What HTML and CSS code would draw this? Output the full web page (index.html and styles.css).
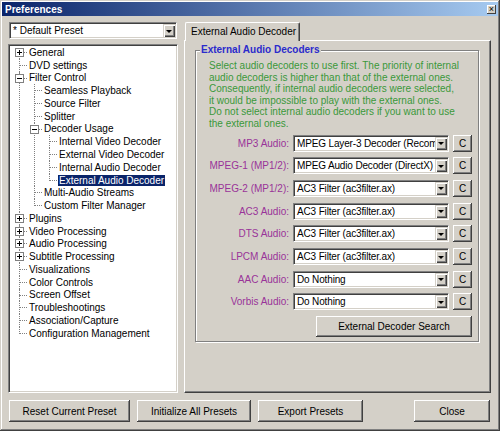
FILE: index.html
```html
<!DOCTYPE html>
<html lang="en">
<head>
    <meta charset="UTF-8">
    <title>Preferences</title>
    <link rel="stylesheet" href="styles.css">
</head>
<body>
<div class="window">
    <div class="titlebar">
        <span class="title">Preferences</span>
        <span class="close-btn">×</span>
    </div>

    <div class="main">
        <div class="left">
            <div class="combo preset"><span class="combo-text">* Default Preset</span><span class="arrow"></span></div>
            <div class="tree-box">
                <ul class="tree">
                    <li><span class="toggle plus"></span><div class="row"><span class="label">General</span></div></li>
                    <li><div class="row"><span class="label">DVD settings</span></div></li>
                    <li><span class="toggle minus"></span><div class="row"><span class="label">Filter Control</span></div>
                        <ul>
                            <li><div class="row"><span class="label">Seamless Playback</span></div></li>
                            <li><div class="row"><span class="label">Source Filter</span></div></li>
                            <li><div class="row"><span class="label">Splitter</span></div></li>
                            <li><span class="toggle minus"></span><div class="row"><span class="label">Decoder Usage</span></div>
                                <ul>
                                    <li><div class="row"><span class="label">Internal Video Decoder</span></div></li>
                                    <li><div class="row"><span class="label">External Video Decoder</span></div></li>
                                    <li><div class="row"><span class="label">Internal Audio Decoder</span></div></li>
                                    <li><div class="row"><span class="label selected">External Audio Decoder</span></div></li>
                                </ul>
                            </li>
                            <li><div class="row"><span class="label">Multi-Audio Streams</span></div></li>
                            <li><div class="row"><span class="label">Custom Filter Manager</span></div></li>
                        </ul>
                    </li>
                    <li><span class="toggle plus"></span><div class="row"><span class="label">Plugins</span></div></li>
                    <li><span class="toggle plus"></span><div class="row"><span class="label">Video Processing</span></div></li>
                    <li><span class="toggle plus"></span><div class="row"><span class="label">Audio Processing</span></div></li>
                    <li><span class="toggle plus"></span><div class="row"><span class="label">Subtitle Processing</span></div></li>
                    <li><div class="row"><span class="label">Visualizations</span></div></li>
                    <li><div class="row"><span class="label">Color Controls</span></div></li>
                    <li><div class="row"><span class="label">Screen Offset</span></div></li>
                    <li><div class="row"><span class="label">Troubleshootings</span></div></li>
                    <li><div class="row"><span class="label">Association/Capture</span></div></li>
                    <li><div class="row"><span class="label">Configuration Management</span></div></li>
                </ul>
            </div>
        </div>

        <div class="right">
            <div class="tabs"><div class="tab">External Audio Decoder</div></div>
            <div class="panel">
                <fieldset class="group">
                    <legend>External Audio Decoders</legend>
                    <p class="desc">Select audio decoders to use first. The priority of internal<br>audio decoders is higher than that of the external ones.<br>Consequently, if internal audio decoders were selected,<br>it would be impossible to play with the external ones.<br>Do not select internal audio decoders if you want to use<br>the external ones.</p>
                    <div class="decoders">
                        <span class="dec-label">MP3 Audio:</span>
                        <div class="combo"><span class="combo-text">MPEG Layer-3 Decoder (Recomm</span><span class="arrow"></span></div>
                        <button class="btn c-btn">C</button>

                        <span class="dec-label">MPEG-1 (MP1/2):</span>
                        <div class="combo"><span class="combo-text">MPEG Audio Decoder (DirectX)</span><span class="arrow"></span></div>
                        <button class="btn c-btn">C</button>

                        <span class="dec-label">MPEG-2 (MP1/2):</span>
                        <div class="combo"><span class="combo-text">AC3 Filter (ac3filter.ax)</span><span class="arrow"></span></div>
                        <button class="btn c-btn">C</button>

                        <span class="dec-label">AC3 Audio:</span>
                        <div class="combo"><span class="combo-text">AC3 Filter (ac3filter.ax)</span><span class="arrow"></span></div>
                        <button class="btn c-btn">C</button>

                        <span class="dec-label">DTS Audio:</span>
                        <div class="combo"><span class="combo-text">AC3 Filter (ac3filter.ax)</span><span class="arrow"></span></div>
                        <button class="btn c-btn">C</button>

                        <span class="dec-label">LPCM Audio:</span>
                        <div class="combo"><span class="combo-text">AC3 Filter (ac3filter.ax)</span><span class="arrow"></span></div>
                        <button class="btn c-btn">C</button>

                        <span class="dec-label">AAC Audio:</span>
                        <div class="combo"><span class="combo-text">Do Nothing</span><span class="arrow"></span></div>
                        <button class="btn c-btn">C</button>

                        <span class="dec-label">Vorbis Audio:</span>
                        <div class="combo"><span class="combo-text">Do Nothing</span><span class="arrow"></span></div>
                        <button class="btn c-btn">C</button>

                        <button class="btn search-btn">External Decoder Search</button>
                    </div>
                </fieldset>
            </div>
        </div>
    </div>

    <div class="buttons">
        <button class="btn reset-btn">Reset Current Preset</button>
        <button class="btn init-btn">Initialize All Presets</button>
        <button class="btn export-btn">Export Presets</button>
        <button class="btn close-dlg">Close</button>
    </div>
</div>
</body>
</html>
```

FILE: styles.css
```css
* { box-sizing: border-box; }
body { margin: 0; width: 500px; height: 431px; overflow: hidden; background: #d4d0c8; color: #000; font-family: "Liberation Sans", Arial, sans-serif; font-size: 10px; }

.window { height: 431px; padding: 2px; box-shadow: inset -1px -1px #404040, inset 1px 1px #d4d0c8, inset -2px -2px #808080, inset 2px 2px #fff; }

/* title bar */
.titlebar { height: 14px; display: flex; align-items: center; padding: 0 2px 0 3px; background: linear-gradient(to right, #0a246a, #a6caf0); }
.title { color: #fff; font-weight: bold; font-size: 10px; }
.close-btn { margin-left: auto; width: 9px; height: 9px; background: #d4d0c8; box-shadow: inset -1px -1px #404040, inset 1px 1px #fff; font-size: 9px; line-height: 8px; text-align: center; color: #000; }

.main { display: flex; gap: 6px; margin-top: 6px; padding-left: 6px; }
.left { width: 170px; }
.right { width: 307px; }

/* combo boxes */
.combo { display: flex; height: 17px; padding: 1px; background: #fff; border: 1px solid; border-color: #808080 #fff #fff #808080; box-shadow: inset 1px 1px #404040, inset -1px -1px #d4d0c8; }
.combo-text { flex: 1; min-width: 0; padding-left: 2px; line-height: 13px; letter-spacing: -0.15px; white-space: nowrap; overflow: hidden; }
.arrow { flex: none; width: 12px; display: flex; align-items: center; justify-content: center; background: #d4d0c8; box-shadow: inset 1px 1px #d4d0c8, inset 2px 2px #fff, inset -1px -1px #404040, inset -2px -2px #808080; }
.arrow::after { content: ""; border-left: 3px solid transparent; border-right: 3px solid transparent; border-top: 3px solid #000; margin-top: 1px; }
.preset { margin: 0 1px; }
.preset .combo-text { letter-spacing: 0; }

/* tree */
.tree-box { margin-top: 5px; height: 349px; background: #fff; border: 1px solid; border-color: #808080 #fff #fff #808080; box-shadow: inset 1px 1px #404040, inset -1px -1px #d4d0c8; padding: 1px; overflow: hidden; }
.tree, .tree ul { list-style: none; margin: 0; padding: 0; }
.tree ul { margin-left: -3px; }
.tree li { position: relative; padding-left: 18px; }
.tree li::before { content: ""; position: absolute; left: 9px; top: 6px; width: 8px; border-top: 1px dotted #808080; }
.tree li::after { content: ""; position: absolute; left: 9px; top: 0; bottom: 0; border-left: 1px dotted #808080; }
.tree li:last-child::after { bottom: auto; height: 7px; }
.tree > li:first-child::after { top: 6px; }
.row { height: 12.77px; display: flex; align-items: center; }
.label { padding: 0 1px; line-height: 11px; white-space: nowrap; }
.label.selected { background: #0a246a; color: #fff; }
.toggle { position: absolute; left: 5px; top: 2px; z-index: 1; width: 9px; height: 9px; border: 1px solid #808080; }
.toggle.minus { background: linear-gradient(#000, #000) center / 5px 1px no-repeat, #fff; }
.toggle.plus { background: linear-gradient(#000, #000) center / 5px 1px no-repeat, linear-gradient(#000, #000) center / 1px 5px no-repeat, #fff; }

/* tab page */
.tabs { height: 18px; display: flex; }
.tab { position: relative; z-index: 1; margin-left: 1px; width: 115px; height: 19px; padding-left: 5px; line-height: 17px; background: #d4d0c8; border-top: 1px solid #fff; border-left: 1px solid #fff; border-right: 1px solid #404040; border-radius: 2px 2px 0 0; box-shadow: inset -1px 0 #808080; }
.panel { height: 353px; border: 1px solid; border-color: #fff #404040 #404040 #fff; box-shadow: inset -1px -1px #808080; }

.group { margin: 3px 11px 0 10px; padding: 4px 0 4px 0; border: 1px solid #808080; box-shadow: 1px 1px 0 #fff, inset 1px 1px 0 #fff; }
.group legend { margin-left: 4px; padding: 0 1px; line-height: 12px; font-weight: bold; color: #2b2bcc; background: #d4d0c8; }
.desc { margin: 0 0 5px 13px; line-height: 11.6px; color: #3a983a; white-space: nowrap; }

.decoders { margin-left: 13px; display: grid; grid-template-columns: 80px 156px 19px; grid-template-rows: repeat(8, 17px) 21px; column-gap: 4px; row-gap: 5.7px; }
.dec-label { justify-self: end; line-height: 17px; color: #993399; white-space: nowrap; }

/* buttons */
.btn { padding: 0; border: 0; background: #d4d0c8; color: #000; font-family: inherit; font-size: 10px; box-shadow: inset -1px -1px #404040, inset 1px 1px #fff, inset -2px -2px #808080; }
.c-btn { height: 17px; }
.search-btn { grid-column: 2 / 4; justify-self: end; width: 156px; height: 21px; }

.buttons { display: flex; gap: 7px; margin-top: 7px; padding: 0 8px 0 7px; }
.buttons .btn { height: 22px; }
.reset-btn { width: 121px; }
.init-btn { width: 114px; }
.export-btn { width: 105px; }
.close-dlg { width: 76px; margin-left: auto; }
```
